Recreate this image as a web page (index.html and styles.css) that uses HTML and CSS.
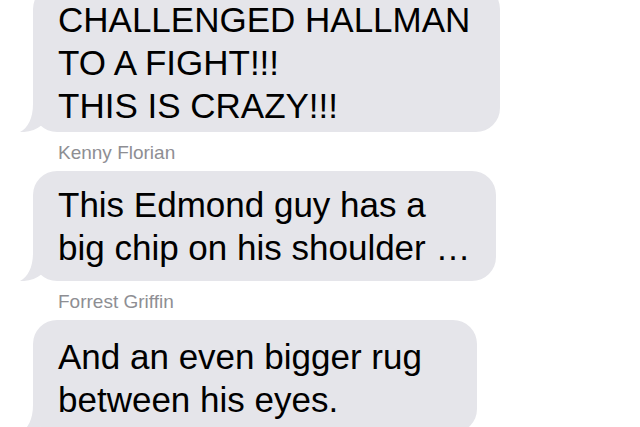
FILE: index.html
```html
<!DOCTYPE html>
<html lang="en">
<head>
    <meta charset="UTF-8">
    <meta name="viewport" content="width=device-width, initial-scale=1.0">
    <title>Group Chat</title>
    <link rel="stylesheet" href="styles.css">
</head>
<body>
    <div class="thread">
        <div class="bubble bubble-first">
            CHALLENGED HALLMAN<br>TO A FIGHT!!!<br>THIS IS CRAZY!!!
            <svg class="tail" width="32" height="28" viewBox="0 0 32 28"><path d="M13 0 C13 14 8 24 0 28 C8 28.5 16 26 22 21 L22 0 Z"/></svg>
        </div>
        <div class="sender">Kenny Florian</div>
        <div class="bubble bubble-mid">
            This Edmond guy has a<br>big chip on his shoulder …
            <svg class="tail" width="32" height="28" viewBox="0 0 32 28"><path d="M13 0 C13 14 8 24 0 28 C8 28.5 16 26 22 21 L22 0 Z"/></svg>
        </div>
        <div class="sender">Forrest Griffin</div>
        <div class="bubble bubble-last">
            And an even bigger rug<br>between his eyes.
            <svg class="tail" width="32" height="28" viewBox="0 0 32 28"><path d="M13 0 C13 14 8 24 0 28 C8 28.5 16 26 22 21 L22 0 Z"/></svg>
        </div>
    </div>
</body>
</html>
```

FILE: styles.css
```css
body {
    margin: 0;
    padding: 0;
    background-color: #fff;
    font-family: "Liberation Sans", Arial, sans-serif;
    overflow: hidden;
}
.thread {
    display: flex;
    flex-direction: column;
    align-items: flex-start;
    padding-left: 33px;
    margin-top: -15px;
}
.bubble {
    position: relative;
    box-sizing: border-box;
    background-color: #e5e5ea;
    color: #000;
    font-size: 35px;
    line-height: 43px;
    padding: 12px 20px 12px 25px;
    border-radius: 24px;
    white-space: nowrap;
}
.bubble-first {
    width: 467px;
    padding-top: 13px;
    padding-bottom: 5px;
}
.bubble-mid {
    width: 463px;
}
.bubble-last {
    width: 444px;
    padding-top: 15px;
}
.tail {
    position: absolute;
    left: -13px;
    bottom: 0;
    fill: #e5e5ea;
}
.sender {
    color: #8e8e93;
    font-size: 19px;
    line-height: 22px;
    margin: 10px 0 7px 25px;
}
```
